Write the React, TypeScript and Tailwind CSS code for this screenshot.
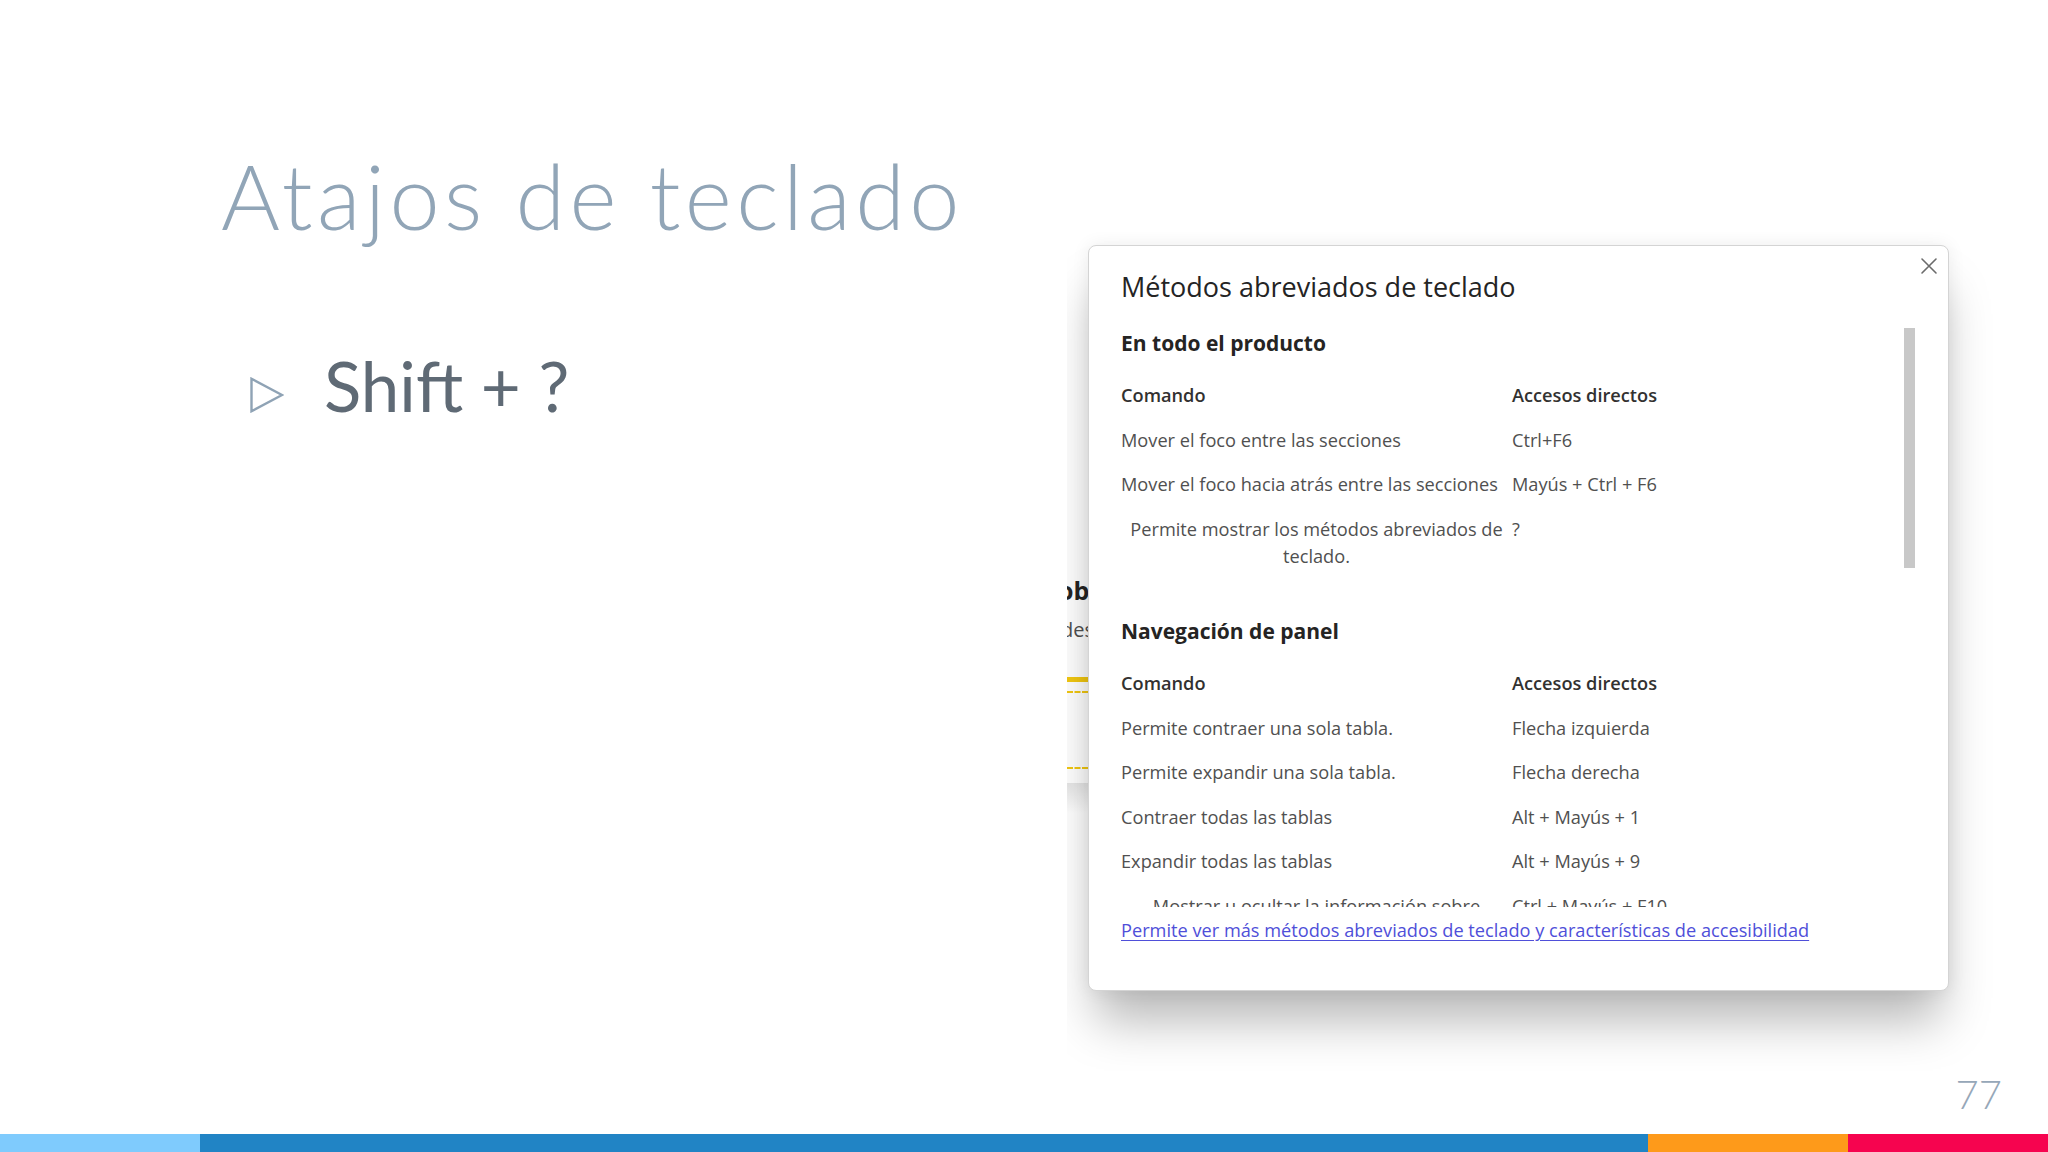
import React from "react";

type Row = { cmd: string; key: string; center?: boolean };

const section1: Row[] = [
  { cmd: "Mover el foco entre las secciones", key: "Ctrl+F6" },
  { cmd: "Mover el foco hacia atrás entre las secciones", key: "Mayús + Ctrl + F6" },
  { cmd: "Permite mostrar los métodos abreviados de teclado.", key: "?", center: true },
];

const section2: Row[] = [
  { cmd: "Permite contraer una sola tabla.", key: "Flecha izquierda" },
  { cmd: "Permite expandir una sola tabla.", key: "Flecha derecha" },
  { cmd: "Contraer todas las tablas", key: "Alt + Mayús + 1" },
  { cmd: "Expandir todas las tablas", key: "Alt + Mayús + 9" },
  { cmd: "Mostrar u ocultar la información sobre herramientas", key: "Ctrl + Mayús + F10", center: true },
];

function HeaderRow() {
  return (
    <div className="flex pt-[9px] pb-[8.5px] leading-[27px] text-[18.2px] font-semibold text-[#323130]">
      <div className="w-[391px] shrink-0">Comando</div>
      <div>Accesos directos</div>
    </div>
  );
}

function DataRow({ row }: { row: Row }) {
  return (
    <div className="flex pt-[9px] pb-[8.5px] leading-[27px] text-[18.2px] text-[#505050]">
      <div className={"w-[391px] shrink-0 " + (row.center ? "text-center" : "")}>{row.cmd}</div>
      <div>{row.key}</div>
    </div>
  );
}

function Section({ title, rows, first }: { title: string; rows: Row[]; first?: boolean }) {
  return (
    <div className={first ? "pt-[1px]" : "mt-[36px]"}>
      <div className="h-[36px] flex items-center text-[21px] font-bold text-[#252423]">{title}</div>
      <div className="mt-[11px]">
        <HeaderRow />
        {rows.map((r, i) => (
          <DataRow key={i} row={r} />
        ))}
      </div>
    </div>
  );
}

function Dialog() {
  return (
    <div className="mt-[13px] w-[861px] h-[746px] shrink-0 rounded-[8px] bg-white border border-[#d4d4d4] shadow-[0_38px_46px_-8px_rgba(0,0,0,0.28),0_0_18px_rgba(0,0,0,0.07)] flex flex-col font-['Open_Sans','Noto_Sans',sans-serif]">
      <div className="h-[79px] flex justify-between">
        <div className="pl-[32px] pt-[24px] text-[27px] leading-[34px] text-[#242424]">
          Métodos abreviados de teclado
        </div>
        <div className="pt-[11px] pr-[10px]">
          <svg width="18" height="18" viewBox="0 0 18 18" fill="none" stroke="#6b6b6b" strokeWidth="1.6" strokeLinecap="round">
            <path d="M2 2 L16 16 M16 2 L2 16" />
          </svg>
        </div>
      </div>
      <div className="h-[582px] flex overflow-hidden">
        <div className="w-[815px] pl-[32px] shrink-0">
          <Section title="En todo el producto" rows={section1} first />
          <Section title="Navegación de panel" rows={section2} />
        </div>
        <div className="pt-[3px]">
          <div className="w-[11px] h-[240px] bg-[#c8c8c8]" />
        </div>
      </div>
      <div className="pl-[32px] mt-[11px] leading-[24px] text-[18.2px]">
        <span className="text-[#4f4fd9] underline underline-offset-[3px] decoration-[1px]">
          Permite ver más métodos abreviados de teclado y características de accesibilidad
        </span>
      </div>
    </div>
  );
}

function Screenshot() {
  return (
    <div className="mt-[232px] w-[938px] h-[839px] overflow-hidden flex bg-white">
      <div className="w-[21px] shrink-0 flex flex-col overflow-hidden font-['Open_Sans',sans-serif]">
        <div className="mt-[342px] ml-[-9px] text-[25px] leading-[32px] font-bold text-[#252423] whitespace-nowrap">ob</div>
        <div className="mt-[10px] ml-[-6px] text-[20px] leading-[28px] text-[#505050] whitespace-nowrap">des</div>
        <div className="mt-[33px] h-[5px] bg-[#f2c811]" />
        <div className="mt-[9px] border-t-2 border-dashed border-[#f2c811]" />
        <div className="mt-[74px] border-t-2 border-dashed border-[#f2c811]" />
        <div className="mt-[14px] h-[30px] bg-gradient-to-b from-[#e6e6e6] to-white" />
      </div>
      <Dialog />
    </div>
  );
}

export default function App() {
  return (
    <div className="w-[2048px] h-[1152px] bg-white flex flex-col overflow-hidden font-['Lato',sans-serif]">
      <div className="h-[1074px] flex shrink-0">
        <div className="w-[1067px] shrink-0 pl-[221px] pt-[150px]">
          <div className="text-[90px] leading-none font-light text-[#91a5b7] tracking-[4.4px] whitespace-nowrap">
            Atajos de teclado
          </div>
          <div className="mt-[111px] ml-[29px] flex items-start gap-[40px]">
            <svg className="mt-[26px]" width="34" height="36" viewBox="0 0 34 36" fill="none" stroke="#8fa3b5" strokeWidth="2.4" strokeLinejoin="miter">
              <path d="M1.5 1.8 L32 18 L1.5 34.2 Z" />
            </svg>
            <div className="text-[69px] leading-none text-[#5f6a75] whitespace-nowrap">Shift + ?</div>
          </div>
        </div>
        <Screenshot />
      </div>
      <div className="flex-1 flex justify-end pr-[46px]">
        <div className="text-[40px] leading-none font-light text-[#96a7b8]">77</div>
      </div>
      <div className="h-[18px] flex shrink-0">
        <div className="w-[200px] bg-[#7fcbfd]" />
        <div className="flex-1 bg-[#2184c5]" />
        <div className="w-[200px] bg-[#fe9a1a]" />
        <div className="w-[200px] bg-[#f6044f]" />
      </div>
    </div>
  );
}
